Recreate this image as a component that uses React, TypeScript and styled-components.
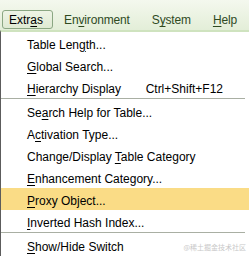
import React from 'react'
import styled, { createGlobalStyle } from 'styled-components'

const GlobalStyle = createGlobalStyle`
  html, body {
    margin: 0;
    padding: 0;
    background: #ffffff;
  }
  body {
    font-family: 'Liberation Sans', Arial, sans-serif;
    font-size: 12px;
    color: #000;
  }
`

const Frame = styled.div`
  position: relative;
  width: 249px;
  height: 257px;
  overflow: hidden;
  background: #fff;
`

const MenuBar = styled.div`
  height: 30px;
  box-sizing: border-box;
  display: flex;
  align-items: flex-end;
  gap: 3px;
  padding: 0 0 1px 2px;
  background: linear-gradient(#f4f8ee, #e3eed8);
`

const BarItem = styled.div<{ $open?: boolean }>`
  height: 19px;
  box-sizing: border-box;
  display: flex;
  align-items: center;
  padding: ${({ $open }) => ($open ? '1px 9px 0 6px' : '1px 10px 0 7px')};
  border: 1px solid ${({ $open }) => ($open ? '#8ba783' : 'transparent')};
  border-radius: 3px;
  background: ${({ $open }) => ($open ? 'linear-gradient(#eef4e6, #dfead3)' : 'none')};
  color: ${({ $open }) => ($open ? '#000' : '#2f4a1f')};
  letter-spacing: ${({ $open }) => ($open ? '0' : '-0.15px')};
  white-space: nowrap;
`

const Key = styled.span`
  text-decoration: underline;
  text-underline-offset: 2px;
`

const Dropdown = styled.div`
  border-top: 2px solid #cfe3bf;
  border-left: 1px solid #5c5c5c;
  background: #fff;
`

const Item = styled.div<{ $active?: boolean }>`
  height: 22px;
  box-sizing: border-box;
  display: flex;
  align-items: center;
  justify-content: space-between;
  padding: 3px 26px 0 26px;
  background: ${({ $active }) => ($active ? '#fadc86' : 'transparent')};
  white-space: nowrap;
`

const Shortcut = styled.span`
  color: #000;
`

const Separator = styled.div`
  height: 2px;
  box-sizing: border-box;
  border-top: 1px solid #a9afa3;
  margin-right: 4px;
`

const Watermark = styled.div`
  position: absolute;
  right: 3px;
  bottom: 5px;
  font-family: 'Noto Sans CJK SC', sans-serif;
  font-size: 7px;
  color: #c8c8c8;
`

type Entry = { before: string; key: string; after: string; shortcut?: string; active?: boolean } | 'sep'

const entries: Entry[] = [
  { before: 'Table Len', key: 'g', after: 'th...' },
  { before: '', key: 'G', after: 'lobal Search...' },
  { before: '', key: 'H', after: 'ierarchy Display', shortcut: 'Ctrl+Shift+F12' },
  'sep',
  { before: 'Se', key: 'a', after: 'rch Help for Table...' },
  { before: 'A', key: 'c', after: 'tivation Type...' },
  { before: 'Change/Display ', key: 'T', after: 'able Category' },
  { before: '', key: 'E', after: 'nhancement Category...' },
  { before: '', key: 'P', after: 'roxy Object...', active: true },
  { before: '', key: 'I', after: 'nverted Hash Index...' },
  'sep',
  { before: '', key: 'S', after: 'how/Hide Switch' },
]

export default function App() {
  return (
    <Frame>
      <GlobalStyle />
      <MenuBar>
        <BarItem $open>
          Extr<Key>a</Key>s
        </BarItem>
        <BarItem>
          En<Key>v</Key>ironment
        </BarItem>
        <BarItem>
          S<Key>y</Key>stem
        </BarItem>
        <BarItem>
          <Key>H</Key>elp
        </BarItem>
      </MenuBar>
      <Dropdown>
        {entries.map((e, i) =>
          e === 'sep' ? (
            <Separator key={i} />
          ) : (
            <Item key={i} $active={e.active}>
              <span>
                {e.before}
                <Key>{e.key}</Key>
                {e.after}
              </span>
              {e.shortcut && <Shortcut>{e.shortcut}</Shortcut>}
            </Item>
          )
        )}
      </Dropdown>
      <Watermark>@稀土掘金技术社区</Watermark>
    </Frame>
  )
}
